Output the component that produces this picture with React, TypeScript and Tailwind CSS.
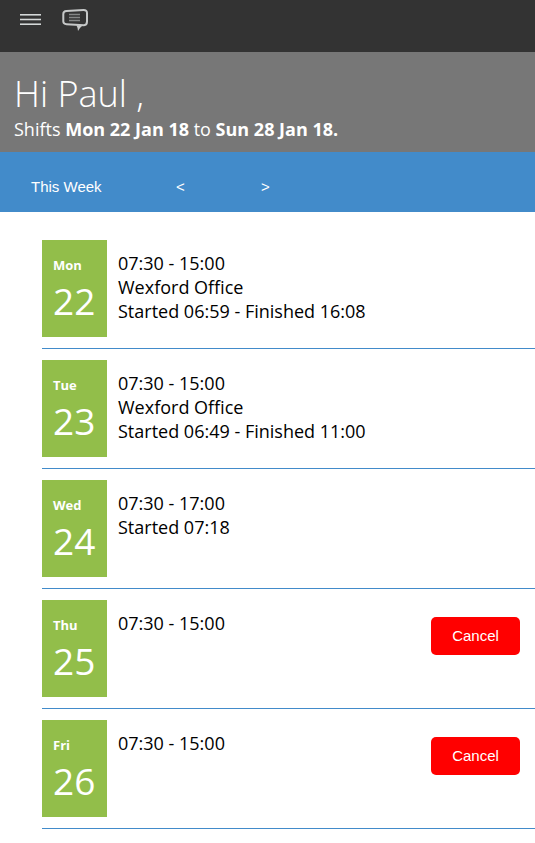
type Shift = { day: string; date: number; lines: string[]; cancellable?: boolean };

const shifts: Shift[] = [
  { day: "Mon", date: 22, lines: ["07:30 - 15:00", "Wexford Office", "Started 06:59 - Finished 16:08"] },
  { day: "Tue", date: 23, lines: ["07:30 - 15:00", "Wexford Office", "Started 06:49 - Finished 11:00"] },
  { day: "Wed", date: 24, lines: ["07:30 - 17:00", "Started 07:18"] },
  { day: "Thu", date: 25, lines: ["07:30 - 15:00"], cancellable: true },
  { day: "Fri", date: 26, lines: ["07:30 - 15:00"], cancellable: true },
];

function TopBar() {
  return (
    <header className="flex h-[52px] items-start gap-5 bg-[#333333] px-5 pt-2">
      <button type="button" aria-label="Menu" className="pt-1">
        <svg width="22" height="14" viewBox="0 0 22 14">
          <path d="M0 3H21M0 7.500H21M0 12H21" stroke="#8f9292" strokeWidth="2" />
          <path d="M0 2.500H21M0 7.500H21M0 12.500H21" stroke="#d5d8d8" strokeWidth="1" />
        </svg>
      </button>
      <button type="button" aria-label="Messages">
        <svg width="27" height="24" viewBox="0 0 27 24" fill="none">
          <path
            d="M4.500 3L21.500 2Q25 1.900 25 5V13.500Q25 17 22 17.200L4.500 16.200Q1.400 16 1.300 13.500V6Q1.300 3.200 4.500 3Z"
            stroke="#c6c8c8"
            strokeWidth="2"
          />
          <path d="M14.500 17.500H20.500Q18 19.500 16 23Q16 20 14.500 17.500Z" fill="#c6c8c8" />
          <path d="M7 6.500H18M7 9.500H18M7 12.500H18" stroke="#858787" strokeWidth="1.500" />
        </svg>
      </button>
    </header>
  );
}

function ShiftRow({ shift }: { shift: Shift }) {
  return (
    <li className="flex items-start border-b border-[#428bca] pb-[11px]">
      <div className="h-[97px] w-[65px] shrink-0 bg-[#92be4a] pt-[15px] pl-[11px] text-white">
        <div className="text-[13px] leading-5 font-bold">{shift.day}</div>
        <div className="text-[37px] leading-[52px]">{shift.date}</div>
      </div>
      <div className="grow pt-[11px] pl-[11px] text-[18px] leading-6">
        {shift.lines.map((line) => (
          <p key={line}>{line}</p>
        ))}
      </div>
      {shift.cancellable && (
        <button
          type="button"
          className="mt-[17px] mr-[15px] h-[38px] w-[89px] rounded-[5px] bg-[#ff0000] font-['Liberation_Sans',sans-serif] text-[15px] text-white"
        >
          Cancel
        </button>
      )}
    </li>
  );
}

export default function App() {
  return (
    <div className="bg-white font-['Open_Sans',sans-serif] text-black">
      <TopBar />
      <section className="h-[100px] bg-[#777777] px-[14px] pt-[18px] text-white">
        <h1 className="text-[36px] leading-[47px] font-light">Hi Paul ,</h1>
        <p className="text-[18px] leading-6">
          Shifts <b className="font-bold">Mon 22 Jan 18</b> to <b className="font-bold">Sun 28 Jan 18.</b>
        </p>
      </section>
      <nav className="flex h-[60px] items-center bg-[#428bca] pt-[10px] pl-[31px] font-['Liberation_Sans',sans-serif] text-[15px] text-white">
        <button type="button" className="w-[145px] text-left">This Week</button>
        <button type="button" aria-label="Previous week" className="w-[85px] text-left">&lt;</button>
        <button type="button" aria-label="Next week">&gt;</button>
      </nav>
      <main className="pt-7 pb-3 pl-[42px]">
        <ul className="flex flex-col gap-[11px]">
          {shifts.map((shift) => (
            <ShiftRow key={shift.day} shift={shift} />
          ))}
        </ul>
      </main>
    </div>
  );
}
